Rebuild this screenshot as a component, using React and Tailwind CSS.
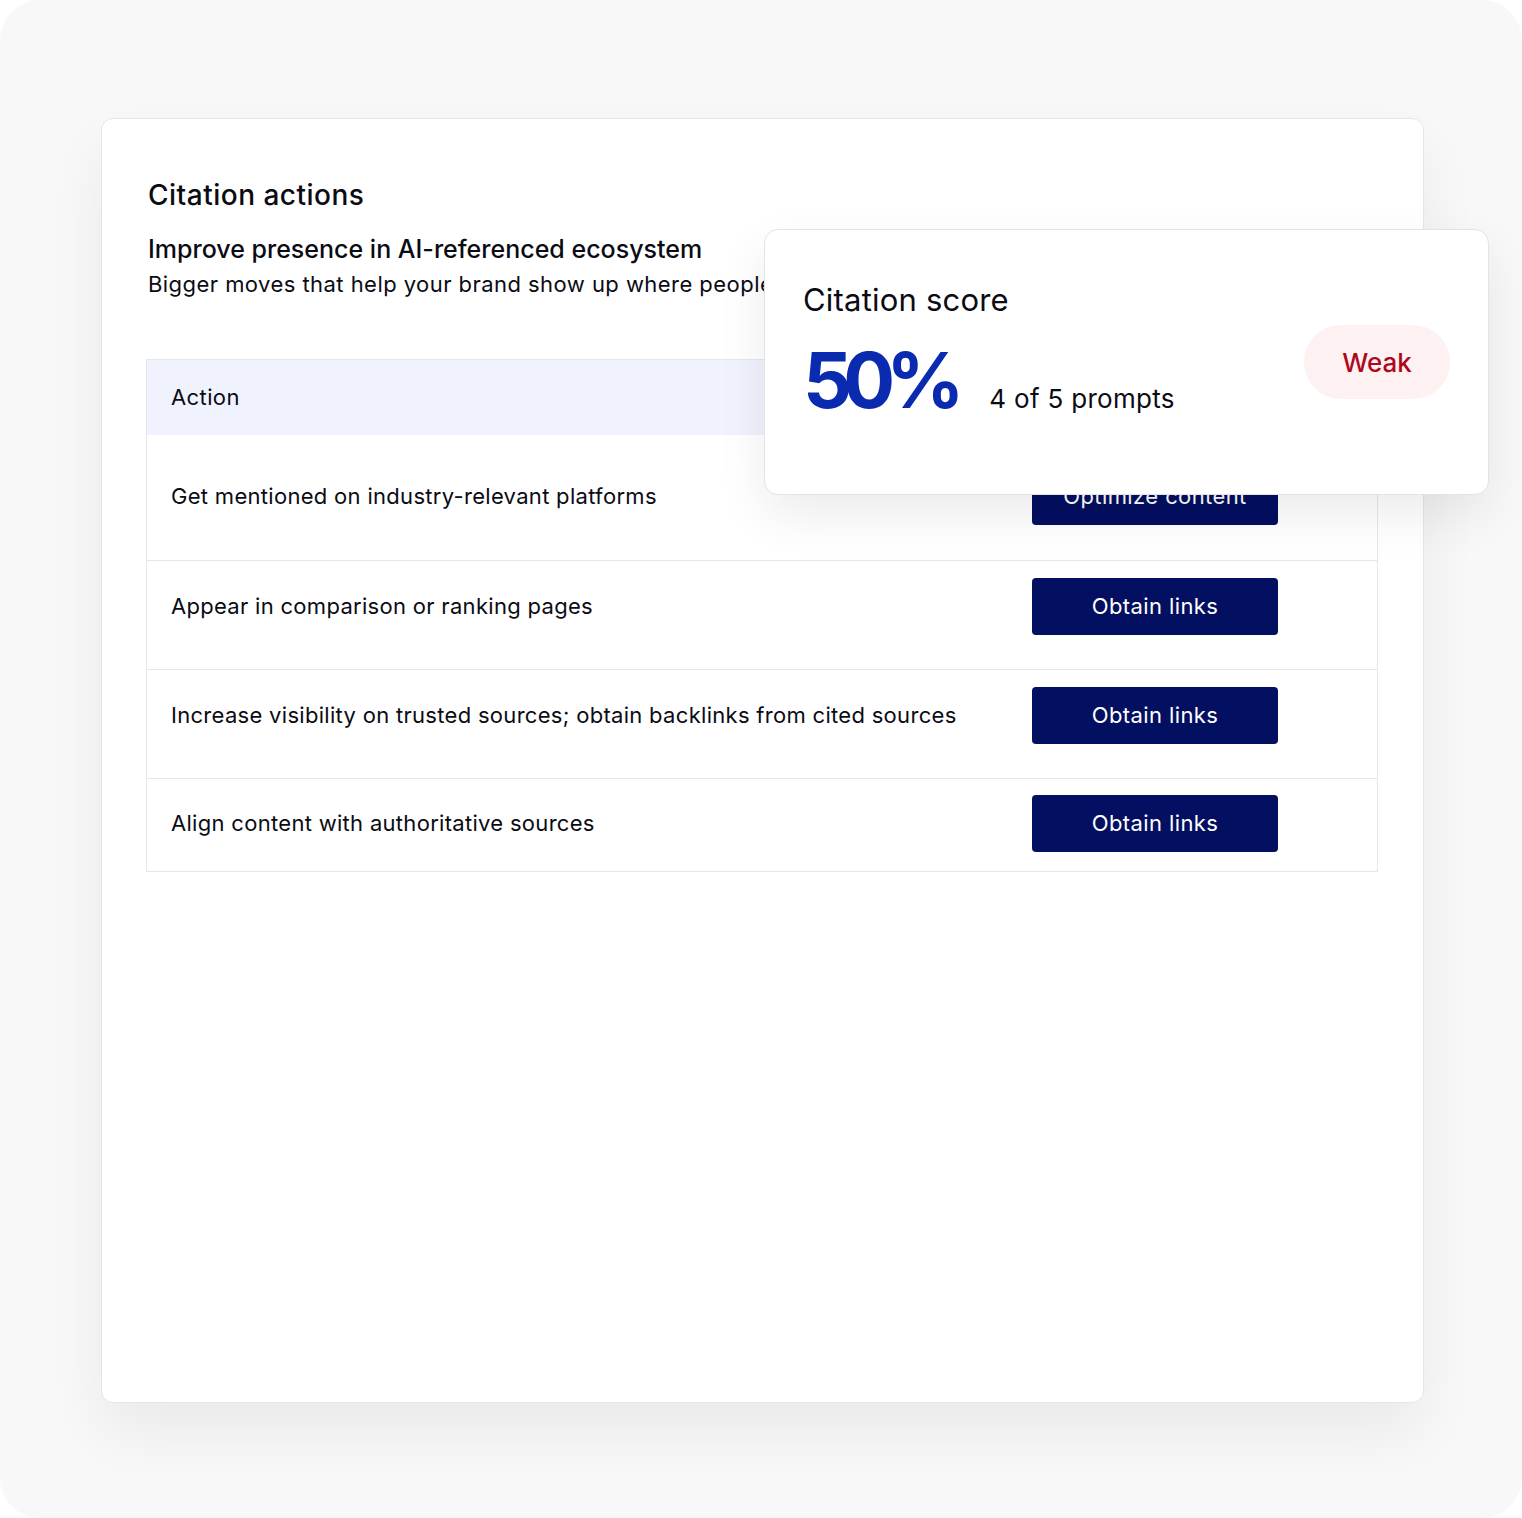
import React from "react";

const rows = [
  { text: "Get mentioned on industry-relevant platforms", cta: "Optimize content", h: "h-[125px] pt-[33px]" },
  { text: "Appear in comparison or ranking pages", cta: "Obtain links", h: "h-[109px] pt-[17px]" },
  { text: "Increase visibility on trusted sources; obtain backlinks from cited sources", cta: "Obtain links", h: "h-[109px] pt-[17px]" },
  { text: "Align content with authoritative sources", cta: "Obtain links", h: "h-[93px] pt-[16px]" },
];

const ScoreCard = () => (
  <div className="absolute left-[662px] top-[110px] w-[725px] h-[266px] bg-white rounded-[14px] border border-[#e3e3e3] shadow-[0_20px_50px_rgba(0,0,0,0.08)] px-[38px] pt-[50px] flex justify-between">
    <div>
      <div className="text-[31px] leading-[40px] tracking-[0.2px] text-[#0b0b14]">Citation score</div>
      <div className="flex items-baseline mt-[24px]">
        <span className="text-[77px] leading-[72px] font-bold tracking-[-9px] text-[#0a2bb0]">50%</span>
        <span className="text-[26px] leading-[32px] tracking-[0.3px] text-[#0b0b14] ml-[34px]">4 of 5 prompts</span>
      </div>
    </div>
    <div className="pt-[45px]">
      <div className="w-[146px] h-[74px] rounded-full bg-[#fdf1f2] flex items-center justify-center text-[26px] font-medium text-[#b0071f]">
        Weak
      </div>
    </div>
  </div>
);

const App = () => {
  return (
    <div className="w-[1522px] h-[1518px] bg-white" style={{ fontFamily: "Inter, 'Noto Sans', sans-serif" }}>
      <div className="w-full h-full rounded-[40px] bg-[#f8f8f8] pt-[118px] pl-[101px]">
        <div className="relative w-[1323px] h-[1285px] bg-white rounded-[12px] border border-[#e6e6e6] shadow-[0_30px_60px_rgba(0,0,0,0.06)] pt-[58px] px-[44px]">
          <h1 className="ml-[2px] text-[28px] leading-[36px] font-medium tracking-[0.5px] text-[#0b0b14]">Citation actions</h1>
          <h2 className="ml-[2px] mt-[19px] text-[25px] leading-[34px] font-medium text-[#0b0b14]">
            Improve presence in AI-referenced ecosystem
          </h2>
          <p className="ml-[2px] mt-[2px] text-[22px] leading-[32px] tracking-[0.45px] text-[#0b0b14]">
            Bigger moves that help your brand show up where people look
          </p>

          <div className="mt-[59px] w-[1232px] border border-[#e6e6e6]">
            <div className="h-[75px] bg-[#f0f3fe] flex items-center pl-[24px] text-[22px] tracking-[0.4px] text-[#0b0b14]">
              <div className="flex-1">Action</div>
            </div>
            {rows.map((r, i) => (
              <div
                key={i}
                className={`${r.h} flex items-start pl-[24px] ${i > 0 ? "border-t border-[#e6e6e6]" : ""}`}
              >
                <div className="flex-1 h-[57px] flex items-center text-[22px] tracking-[0.3px] text-[#0b0b14]">{r.text}</div>
                <div className="w-[345px]">
                  <button className="w-[246px] h-[57px] rounded-[4px] bg-[#030f61] text-white text-[22px] tracking-[0.4px]">
                    {r.cta}
                  </button>
                </div>
              </div>
            ))}
          </div>

          <ScoreCard />
        </div>
      </div>
    </div>
  );
};

export default App;
